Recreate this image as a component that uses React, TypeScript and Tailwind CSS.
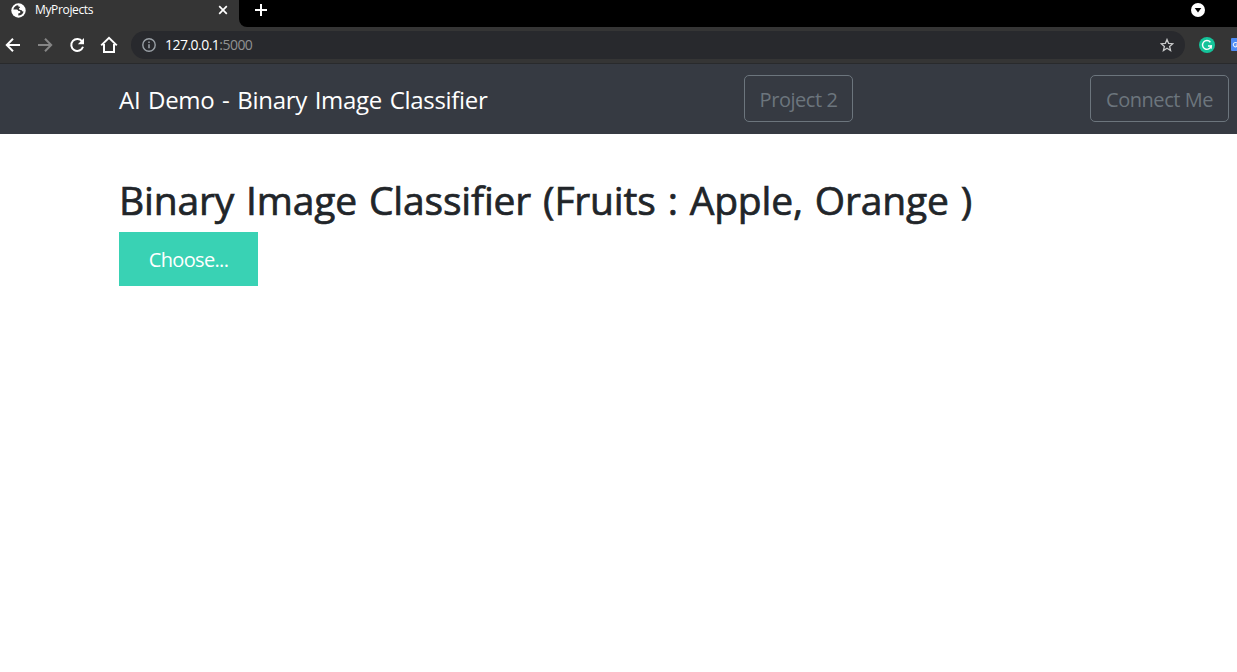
import React from "react";

function BrowserTabs() {
  return (
    <div className="flex h-[27px] bg-black">
      <div className="flex h-full w-[239px] items-start bg-[#353535] pl-[11px]">
        <svg className="mt-[3px] h-[15px] w-[15px] shrink-0" viewBox="0 0 15 15">
          <circle cx="7.5" cy="7.5" r="7.2" fill="#fff" />
          <path d="M7.3 2.2C5 2 2.9 3.8 2.3 6.4l2.9.1c1.3 0 2 .6 2.2 1.5l1.2.1c.6.1.9.6.7 1.2-.2.8-.9 1-1.9 1l-.2 2.3c2.7.1 4.8-1.6 5.4-4.1-1.1.1-1.6-.4-1.8-1.3-1.6.1-2.7-.4-2.8-1.4-.1-.8.5-1 1.1-1.1-.1-1-.8-1.3-1.8-1.2z" fill="#353535" />
        </svg>
        <span className="ml-[9px] mt-[1px] w-[59px] whitespace-nowrap text-[12px] leading-[18px] tracking-[-0.35px] text-white">MyProjects</span>
        <svg className="ml-[124px] mt-[5px] h-[10px] w-[10px] shrink-0" viewBox="0 0 10 10">
          <path d="M1.2 1.2l7.6 7.6M8.8 1.2L1.2 8.8" stroke="#fff" strokeWidth="1.7" />
        </svg>
      </div>
      <div className="h-full grow bg-[#353535]">
        <div className="flex h-full items-start rounded-bl-[8px] bg-black pl-[15px] pr-[32px]">
          <svg className="mt-[3px] h-[14px] w-[14px]" viewBox="0 0 14 14">
            <path d="M7 1v12M1 7h12" stroke="#fff" strokeWidth="2" />
          </svg>
          <svg className="ml-auto mt-[3px] h-[14px] w-[14px]" viewBox="0 0 14 14">
            <circle cx="7" cy="7" r="7" fill="#fff" />
            <path d="M3.7 5h6.6L7 9.5z" fill="#000" />
          </svg>
        </div>
      </div>
    </div>
  );
}

function AddressBar() {
  return (
    <div className="flex h-[37px] items-center overflow-hidden border-b border-[#292a2c] bg-[#353535] pl-[5px]">
      <svg className="h-4 w-4 shrink-0" viewBox="0 0 16 16" fill="none" stroke="#fff" strokeWidth="2">
        <path d="M15 8H2.2M8 1.8L1.8 8 8 14.2" />
      </svg>
      <svg className="ml-4 h-4 w-4 shrink-0" viewBox="0 0 16 16" fill="none" stroke="#858585" strokeWidth="2">
        <path d="M1 8h12.8M8 1.8L14.2 8 8 14.2" />
      </svg>
      <svg className="ml-4 h-4 w-4 shrink-0" viewBox="0 0 16 16">
        <path d="M13.2 4.5A6 6 0 1 0 14 9.8" fill="none" stroke="#fff" strokeWidth="2" />
        <path d="M15 1v6.2H8.8z" fill="#fff" />
      </svg>
      <svg className="ml-[15px] h-[18px] w-[18px] shrink-0" viewBox="0 0 18 18" fill="none" stroke="#fff" strokeWidth="2">
        <path d="M1.2 9.4L9 1.8l7.8 7.6M4 8v8h10V8" />
      </svg>
      <div className="ml-[13px] flex h-7 w-[1054px] shrink-0 items-center rounded-full bg-[#28292d] pl-[11px] pr-[11px]">
        <svg className="h-[14px] w-[14px]" viewBox="0 0 14 14">
          <circle cx="7" cy="7" r="6.2" fill="none" stroke="#9aa0a6" strokeWidth="1.4" />
          <path d="M7 6.2v4M7 3.5v1.4" stroke="#9aa0a6" strokeWidth="1.5" />
        </svg>
        <span className="ml-[9px] whitespace-nowrap text-[14px] leading-5 tracking-[-0.53px] text-white">
          127.0.0.1<span className="text-[#909192]">:5000</span>
        </span>
        <svg className="ml-auto h-[14px] w-[14px]" viewBox="0 0 14 14">
          <path d="M7 1.5l1.6 3.8 4.2.4-3.2 2.7 1 4.1L7 10.3l-3.6 2.2 1-4.1-3.2-2.7 4.2-.4z" fill="none" stroke="#c8c9ca" strokeWidth="1.3" />
        </svg>
      </div>
      <svg className="ml-[14px] h-4 w-4 shrink-0" viewBox="0 0 16 16">
        <circle cx="8" cy="8" r="8" fill="#15c39a" />
        <path d="M11.4 5.2A4.4 4.4 0 1 0 12.2 9H9" fill="none" stroke="#fff" strokeWidth="1.4" />
        <path d="M12.2 8.3v3.5" stroke="#fff" strokeWidth="1.2" />
      </svg>
      <svg className="-mt-[2px] ml-4 h-[13px] w-[13px] shrink-0" viewBox="0 0 13 13">
        <rect width="13" height="13" rx="1" fill="#4d8af4" />
        <path d="M6 5A2.2 2.2 0 1 0 6.7 7H4.7" fill="none" stroke="#e8f0fe" strokeWidth="1.1" />
      </svg>
    </div>
  );
}

function NavButton({ className, children }: { className: string; children: React.ReactNode }) {
  return (
    <button className={"mt-[11px] h-[47px] shrink-0 whitespace-nowrap rounded-[5px] border border-[#6c757d] pt-[3px] text-[20px] leading-[30px] tracking-[-0.45px] text-[#6c757d] " + className}>
      {children}
    </button>
  );
}

export default function App() {
  return (
    <div className="h-[672px] w-[1237px] overflow-hidden bg-white font-['Open_Sans','Noto_Sans',sans-serif]">
      <BrowserTabs />
      <AddressBar />
      <nav className="flex h-[70px] items-start bg-[#363a42] pl-[119px] pr-2">
        <a className="mt-[17px] w-[625px] whitespace-nowrap text-[24px] leading-[38px] tracking-[-0.3px] text-white [word-spacing:1.8px]">AI Demo - Binary Image Classifier</a>
        <NavButton className="w-[109px]">Project 2</NavButton>
        <NavButton className="ml-auto w-[139px]">Connect Me</NavButton>
      </nav>
      <main className="pl-[119px] pt-[42px]">
        <h1 className="whitespace-nowrap text-[39px] font-medium leading-[48px] tracking-[-0.17px] text-[#212529] [-webkit-text-stroke:0.7px_#212529] [word-spacing:2px]">Binary Image Classifier (Fruits : Apple, Orange )</h1>
        <button className="mt-2 block h-[54px] w-[139px] bg-[#39d2b4] pt-[2px] text-[20px] leading-[30px] tracking-[-0.65px] text-white">Choose...</button>
      </main>
    </div>
  );
}
